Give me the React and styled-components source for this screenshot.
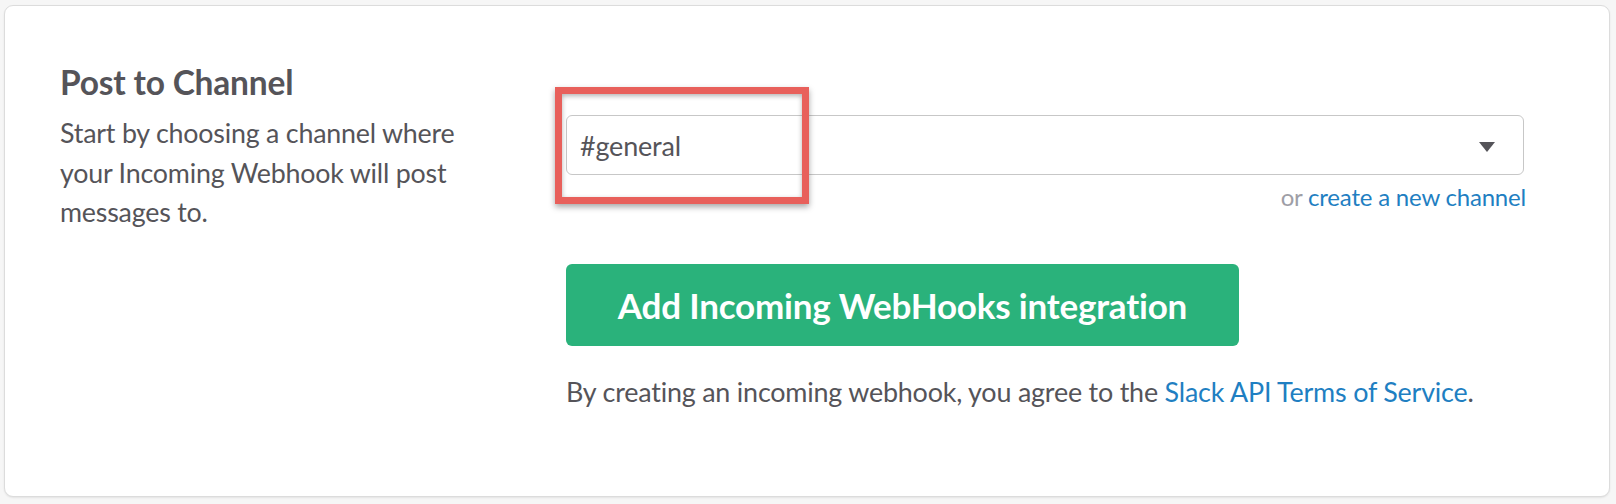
import React from 'react';
import styled, { createGlobalStyle } from 'styled-components';

const GlobalStyle = createGlobalStyle`
  html, body {
    margin: 0;
    padding: 0;
    background: #f6f6f6;
  }
  body {
    font-family: 'Lato', 'Liberation Sans', sans-serif;
    color: #555459;
  }
`

const Page = styled.div`
  width: 1616px;
  height: 504px;
  padding: 5px 6px 7px 4px;
  box-sizing: border-box;
`

const Card = styled.div`
  height: 100%;
  box-sizing: border-box;
  background: #fff;
  border: 1px solid #dcdcdc;
  border-radius: 9px;
  box-shadow: 0 1px 2px rgba(0, 0, 0, 0.08);
  display: grid;
  grid-template-columns: 506px 960px;
  padding: 58px 0 0 55px;
`

const Intro = styled.div`
  display: flex;
  flex-direction: column;
`

const Title = styled.h2`
  margin: 0 0 14px 0;
  font-size: 33.5px;
  line-height: 36px;
  font-weight: 700;
  letter-spacing: -0.2px;
  color: #555459;
`

const Description = styled.p`
  margin: 0;
  width: 412px;
  font-size: 26.8px;
  line-height: 39.5px;
  letter-spacing: -0.2px;
  color: #555459;
`

const Form = styled.div`
  display: flex;
  flex-direction: column;
  padding-top: 51px;
`

const SelectWrap = styled.div`
  position: relative;
  width: 958px;
`

const Select = styled.div`
  height: 60px;
  box-sizing: border-box;
  border: 1px solid #c7c7c7;
  border-radius: 6px;
  display: flex;
  align-items: center;
  justify-content: space-between;
  padding: 0 28px 0 13px;
  font-size: 27px;
  letter-spacing: -0.2px;
  color: #555459;
`

const Caret = styled.span`
  width: 0;
  height: 0;
  border-left: 8.5px solid transparent;
  border-right: 8.5px solid transparent;
  border-top: 10px solid #555459;
  margin-top: 4px;
`

const Highlight = styled.div`
  position: absolute;
  left: -11px;
  top: -28px;
  width: 254px;
  height: 117px;
  box-sizing: border-box;
  border: 7px solid #e8605b;
  box-shadow: 0 3px 6px rgba(0, 0, 0, 0.35), inset 0 2px 5px rgba(0, 0, 0, 0.3);
  pointer-events: none;
`

const Hint = styled.div`
  margin-top: 9px;
  text-align: right;
  font-size: 24px;
  line-height: 26px;
  letter-spacing: -0.2px;
  color: #9e9ea6;
`

const Link = styled.a`
  color: #1f7fc2;
  text-decoration: none;
`

const Button = styled.button`
  margin-top: 54px;
  width: 673px;
  height: 82px;
  border: none;
  border-radius: 6px;
  background: #2ab27b;
  color: #fff;
  font-family: 'Lato', 'Liberation Sans', sans-serif;
  font-size: 35px;
  font-weight: 700;
  letter-spacing: -0.2px;
  cursor: pointer;
`

const Terms = styled.p`
  margin: 30px 0 0 0;
  font-size: 26.9px;
  line-height: 32px;
  letter-spacing: -0.2px;
  color: #555459;
`

export default function App() {
  return (
    <>
      <GlobalStyle />
      <Page>
        <Card>
          <Intro>
            <Title>Post to Channel</Title>
            <Description>
              Start by choosing a channel where your Incoming Webhook will post messages to.
            </Description>
          </Intro>
          <Form>
            <SelectWrap>
              <Select>
                <span>#general</span>
                <Caret />
              </Select>
              <Highlight />
            </SelectWrap>
            <Hint>
              or <Link href="#">create a new channel</Link>
            </Hint>
            <Button>Add Incoming WebHooks integration</Button>
            <Terms>
              By creating an incoming webhook, you agree to the <Link href="#">Slack API Terms of Service</Link>.
            </Terms>
          </Form>
        </Card>
      </Page>
    </>
  );
}
